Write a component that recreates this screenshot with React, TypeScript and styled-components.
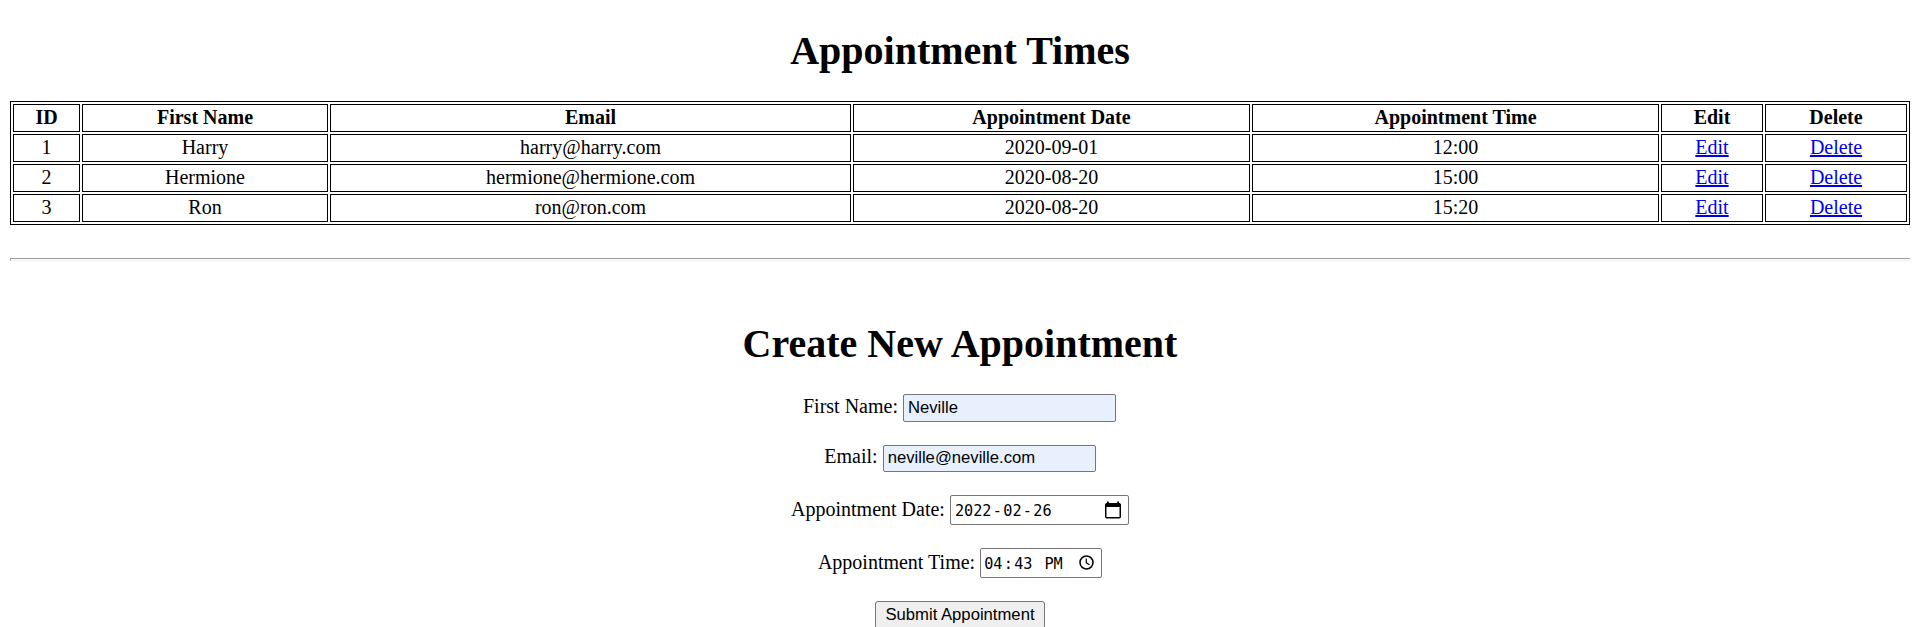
import React from "react";
import styled, { createGlobalStyle } from "styled-components";

const GlobalStyle = createGlobalStyle`
  body {
    margin: 0;
    background: #fff;
    color: #000;
    font: 20px/22px "Liberation Serif", "Times New Roman", serif;
    overflow: hidden;
  }
  *, *::before, *::after { box-sizing: border-box; }
`;

const Page = styled.main`
  height: 627px;
  overflow: hidden;
  padding: 27px 10px 0;
  text-align: center;
`;

const Heading = styled.h1`
  margin: 0;
  font-size: 40px;
  line-height: 47px;
  font-weight: bold;
`;

const Table = styled.table`
  width: 100%;
  margin-top: 27px;
  table-layout: fixed;
  border: 1px solid #000;
  border-collapse: separate;
  border-spacing: 2px;
`;

const Column = styled.col<{ $width: number }>`
  width: ${(p) => p.$width}px;
`;

const HeadCell = styled.th`
  height: 28px;
  padding: 0 1px 2px;
  border: 1px solid #000;
`;

const Cell = styled.td`
  height: 28px;
  padding: 0 1px 2px;
  border: 1px solid #000;
`;

const Link = styled.a`
  color: #0000ee;
  text-decoration: underline;
`;

const Divider = styled.hr`
  height: 3px;
  margin: 33px 0 59px;
  border: 1px solid;
  border-color: #9a9a9a #eee #eee #9a9a9a;
`;

const Form = styled.form`
  display: flex;
  flex-direction: column;
  align-items: center;
  margin-top: 27px;
`;

const Field = styled.label<{ $height: number; $trim?: number }>`
  display: flex;
  align-items: baseline;
  gap: 5px;
  height: ${(p) => p.$height}px;
  margin-bottom: 23px;
  padding-right: ${(p) => p.$trim ?? 0}px;
  white-space: nowrap;
`;

const TextInput = styled.input<{ $height: number }>`
  width: 213px;
  height: ${(p) => p.$height}px;
  margin: 0;
  padding: 1px 4px 2px;
  border: 1px solid #767676;
  border-radius: 2px;
  outline: none;
  background: #e8f0fe;
  color: #000;
  font: 16.667px "Liberation Sans", Arial, sans-serif;
`;

const PickerBox = styled.span<{ $width: number; $inset: number }>`
  display: flex;
  align-items: center;
  justify-content: space-between;
  width: ${(p) => p.$width}px;
  height: 30px;
  padding: 2px 7px 0 ${(p) => p.$inset}px;
  border: 1px solid #767676;
  border-radius: 2px;
  background: #fff;
  font: 15.2px "DejaVu Sans Mono", monospace;

  svg {
    margin-bottom: 3px;
  }
`;

const Segments = styled.span`
  display: flex;
`;

const Segment = styled.span<{ $pad?: number }>`
  padding: 0 ${(p) => p.$pad ?? 0}px;
`;

const SubmitButton = styled.button`
  width: 170px;
  height: 28px;
  padding: 0;
  border: 1px solid #767676;
  border-radius: 3px;
  background: #efefef;
  color: #000;
  font: 16.667px "Liberation Sans", Arial, sans-serif;
`;

const CalendarIcon = () => (
  <svg width="16" height="18" viewBox="0 0 16 18">
    <path fill="#000" fillRule="evenodd" d="M2 2V0.500h1.800V2h8.400V0.500H14V2h.8L16 3.300v12.900L14.800 17.500H1.200L0 16.200V3.300L1.200 2zM1.500 6v10h13V6z" />
  </svg>
);

const ClockIcon = () => (
  <svg width="15" height="15" viewBox="0 0 15 15" fill="none" stroke="#000" strokeWidth="1.500">
    <circle cx="7.500" cy="7.500" r="6.500" />
    <path d="M7.300 3.600v4.200l3.200 1.900" strokeWidth="1.200" />
  </svg>
);

const columns = [
  { label: "ID", width: 67 },
  { label: "First Name", width: 246 },
  { label: "Email", width: 521 },
  { label: "Appointment Date", width: 397 },
  { label: "Appointment Time", width: 407 },
  { label: "Edit", width: 102 },
  { label: "Delete", width: 142 },
];

const appointments = [
  ["1", "Harry", "harry@harry.com", "2020-09-01", "12:00"],
  ["2", "Hermione", "hermione@hermione.com", "2020-08-20", "15:00"],
  ["3", "Ron", "ron@ron.com", "2020-08-20", "15:20"],
];

export default function App() {
  return (
    <>
      <GlobalStyle />
      <Page>
        <Heading>Appointment Times</Heading>
        <Table>
          <colgroup>
            {columns.map((c) => <Column key={c.label} $width={c.width} />)}
          </colgroup>
          <thead>
            <tr>{columns.map((c) => <HeadCell key={c.label}>{c.label}</HeadCell>)}</tr>
          </thead>
          <tbody>
            {appointments.map((row) => (
              <tr key={row[0]}>
                {row.map((value, i) => <Cell key={i}>{value}</Cell>)}
                <Cell><Link href="#edit">Edit</Link></Cell>
                <Cell><Link href="#delete">Delete</Link></Cell>
              </tr>
            ))}
          </tbody>
        </Table>
        <Divider />
        <Heading>Create New Appointment</Heading>
        <Form>
          <Field $height={28} $trim={1}>
            First Name:
            <TextInput $height={28} type="text" defaultValue="Neville" />
          </Field>
          <Field $height={27}>
            Email:
            <TextInput $height={27} type="text" defaultValue="neville@neville.com" />
          </Field>
          <Field $height={30}>
            Appointment Date:
            <PickerBox $width={179} $inset={4}>
              <Segments>
                <Segment>2022</Segment>
                <Segment $pad={1.3}>-</Segment>
                <Segment>02</Segment>
                <Segment $pad={1.3}>-</Segment>
                <Segment>26</Segment>
              </Segments>
              <CalendarIcon />
            </PickerBox>
          </Field>
          <Field $height={30}>
            Appointment Time:
            <PickerBox $width={122} $inset={3}>
              <Segments>
                <Segment>04</Segment>
                <Segment $pad={1.3}>:</Segment>
                <Segment>43</Segment>
                <Segment $pad={6}> </Segment>
                <Segment>PM</Segment>
              </Segments>
              <ClockIcon />
            </PickerBox>
          </Field>
          <SubmitButton type="button">Submit Appointment</SubmitButton>
        </Form>
      </Page>
    </>
  );
}
